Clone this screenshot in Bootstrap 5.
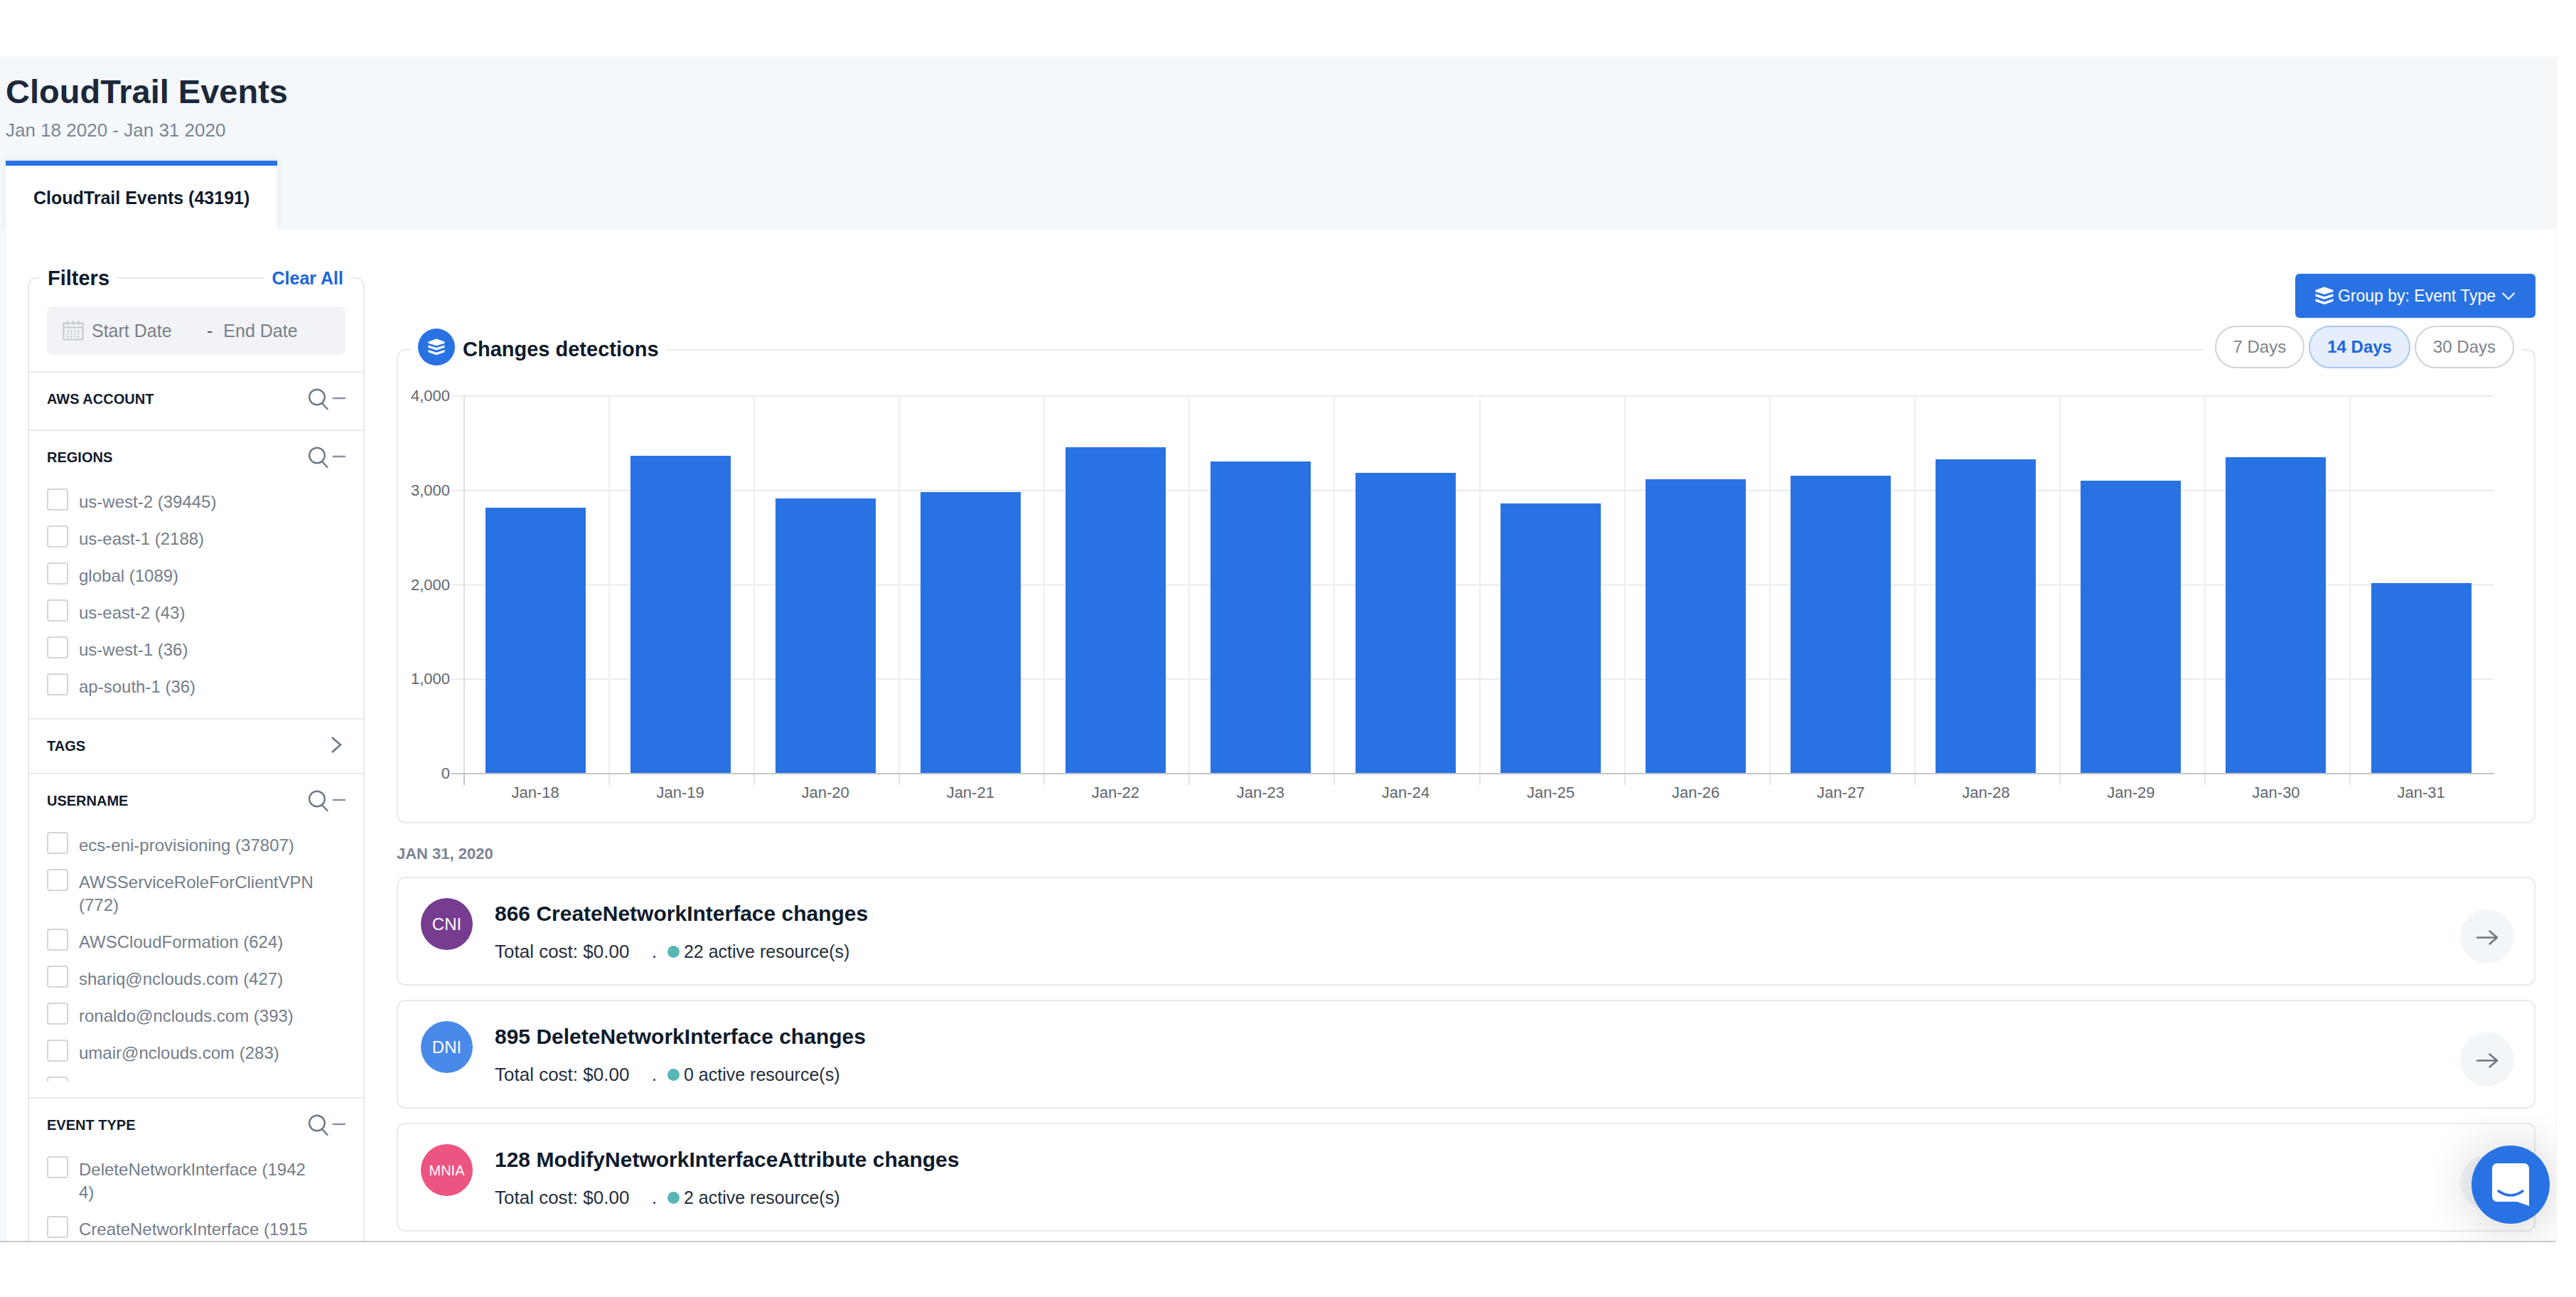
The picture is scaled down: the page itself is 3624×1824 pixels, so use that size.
<!DOCTYPE html>
<html lang="en">
<head>
<meta charset="utf-8">
<meta name="viewport" content="width=device-width, initial-scale=1">
<title>CloudTrail Events</title>
<link href="https://cdn.jsdelivr.net/npm/bootstrap@5.3.0/dist/css/bootstrap.min.css" rel="stylesheet">
<style>
  :root { --blue: #2972e3; --line: #e7eaed; --ink: #101a2b; --muted: #737d8a; }
  body { font-family: "Liberation Sans", Arial, sans-serif; color: var(--ink); background: #fff; font-size: 24px; line-height: 32px; }
  .shell { padding: 80px 28px 77px 0; }
  .app { background: #fff; border-bottom: 2px solid #c6c8ca; box-shadow: 1px 0 0 #f3f4f5; }
  .app-head { background: #f4f8fb; padding: 21px 0 0 8px; }
  .app-title { font-size: 47px; line-height: 56px; font-weight: 700; color: #1c2839; }
  .app-dates { font-size: 26px; line-height: 32px; color: #7b8591; margin: 10px 0 27px; }
  .app-tab { font-size: 25px; line-height: 30px; font-weight: 700; color: var(--ink); background: #fff; border-top: 7px solid var(--blue); padding: 30px 39px; text-decoration: none; box-shadow: 0 -3px 8px rgba(40,60,80,.08); }
  .app-body { border-left: 9px solid #f4f8fb; position: relative; background: #fff; }

  .filters { width: 474px; margin: 67px 45px 0 30px; border: 2px solid var(--line); border-radius: 12px; }
  .filters-top { height: 36px; margin-top: -19px; padding: 0 18px 0 16px; }
  .filters-top > * { background: #fff; padding: 0 10px; line-height: 36px; }
  .filters-name { font-size: 29px; font-weight: 700; }
  .clear { font-size: 25px; font-weight: 700; color: #1a66dc; text-decoration: none; }
  .dates { height: 68px; margin: 22px 25px 23px; padding-left: 22px; border-radius: 8px; background: #f1f3f6; font-size: 25px; }
  .dates input { width: 162px; border: 0; padding: 0; background: transparent; color: #757c83; }
  .dates input::placeholder { color: #7a7f85; opacity: 1; }
  .dates svg { margin-right: 11px; }
  .dates span { color: #555d66; margin-right: 15px; }
  .facet { border-top: 2px solid var(--line); padding: 0 25px 22px; }
  .facet.closed { padding-bottom: 5px; }
  .facet.none { padding-bottom: 10px; }
  .facet-head { height: 70px; padding: 22px 0 18px; }
  .facet-head h2 { font-size: 20px; line-height: 30px; font-weight: 700; }
  .tools { gap: 6px; }
  .tool { border: 0; background: transparent; padding: 0; display: flex; }
  .facet ul { overflow: hidden; }
  .facet .scroller { max-height: 362px; }
  .facet li { padding: 11px 0 6px; gap: 15px; }
  .tick { appearance: none; flex: none; width: 30px; height: 31px; margin: 0; border: 2px solid #d3d6d9; border-radius: 4px; background: #fff; }
  .tick:checked { background: var(--blue); }
  .facet label { width: 331px; margin-top: 3px; color: var(--muted); word-break: break-all; }

  .content { padding: 62px 29px 0 0; min-width: 0; }
  .group-btn { height: 62px; padding: 0 28px; border: 0; border-radius: 6px; background: var(--blue); color: #fff; font-size: 23px; }
  .group-btn span { margin: 0 8px 0 6px; }
  .panel { border: 2px solid var(--line); border-radius: 12px; background: #fff; }
  .chart { margin-top: 44px; }
  .chart-top { height: 60px; margin-top: -35px; padding: 0 18px; }
  .chart-name { background: #fff; padding: 0 11px 0 10px; gap: 11px; }
  .chart-name h2 { font-size: 29px; line-height: 36px; font-weight: 700; padding-top: 5px; }
  .chart-icon { width: 52px; height: 52px; border-radius: 50%; background: var(--blue); }
  .ranges { background: #fff; padding: 0 10px 0 16px; gap: 6px; }
  .pill { height: 60px; padding: 0 24px; border: 2px solid #d0d4d7; border-radius: 30px; background: #fff; color: #7d848c; font-size: 24px; }
  .pill.on { background: #e6eefb; border-color: #a9c7f5; color: #1a66dc; font-weight: 700; }
  .chart-body { padding: 38px 56px 29px 0; font-size: 22px; line-height: 24px; color: #62676d; }
  .y-axis { width: 73px; height: 555px; margin: -11px 2px 0 0; text-align: right; }
  .plot { height: 533px; padding-left: 17px; border-bottom: 2px solid #c4c7ca; background: linear-gradient(#e8eaec 2px, transparent 2px) 0 0 / 100% 25%; }
  .slot { flex: 1 1 0; border-left: 2px solid #eceef0; }
  .slot:first-child { border-color: #dcdfe2; }
  .bar { width: 141px; max-width: 80%; margin-right: 4px; background: var(--blue); }
  .x-axis { padding-left: 17px; }
  .x-axis div { flex: 1 1 0; text-align: center; padding: 14px 2px 0 0; background: linear-gradient(#e3e6e8, #e3e6e8) 0 0 / 2px 15px no-repeat; }
  .x-axis div:first-child { background-image: linear-gradient(#c4c7ca, #c4c7ca); }

  .day { font-size: 22px; line-height: 30px; font-weight: 700; color: #7a8492; margin: 28px 0 17px; }
  .change { padding: 28px 28px 29px 32px; margin-bottom: 20px; }
  .avatar { flex: none; width: 73px; height: 73px; margin-right: 31px; border-radius: 50%; color: #fff; font-size: 24px; }
  .avatar.tiny { font-size: 20px; }
  .change h3 { font-size: 30px; line-height: 36px; font-weight: 700; margin: 4px 0 20px; }
  .facts { font-size: 25px; line-height: 30px; color: #252e3c; }
  .cost { width: 221px; font-size: 26px; }
  .live { width: 17px; height: 17px; border-radius: 50%; background: #58b7b4; margin: 0 6px 0 15px; }
  .go { flex: none; width: 76px; height: 76px; margin-top: 16px; border: 0; border-radius: 50%; background: #f2f6f8; }
  .chat { position: absolute; right: 9px; bottom: 24px; width: 110px; height: 110px; border: 0; border-radius: 50%; background: var(--blue); box-shadow: 0 4px 70px rgba(0,0,0,.2); }
</style>
<script src="https://cdn.jsdelivr.net/npm/bootstrap@5.3.0/dist/js/bootstrap.bundle.min.js"></script>
</head>
<body>
<svg class="d-none" aria-hidden="true">
  <symbol id="i-search" viewBox="0 0 28 30"><g fill="none" stroke="#6f7985" stroke-width="2.4" stroke-linecap="round"><circle cx="12" cy="12.500" r="10.800"/><path d="M19 21l7.500 8"/></g></symbol>
  <symbol id="i-minus" viewBox="0 0 18 30"><path d="M1 14h16" stroke="#8a939d" stroke-width="2.600" stroke-linecap="round"/></symbol>
  <symbol id="i-stack" viewBox="0 0 26 26"><path d="M13 0.500 25.500 5v2.300L13 11 .5 7.300V5z"/><path d="M.5 10.200 13 14.200l12.500-4v3.600L13 18 .5 13.800z"/><path d="M.5 17.200 13 21.400l12.500-4.200v3.600L13 25.300.5 20.800z"/></symbol>
  <symbol id="i-arrow" viewBox="0 0 32 22"><path d="M2 10.500h27M19.500 1.500 30 10.500l-10.500 9" fill="none" stroke="#72757f" stroke-width="2.500" stroke-linecap="round" stroke-linejoin="round"/></symbol>
</svg>

<div class="shell vh-100 overflow-hidden">
<div class="app h-100 d-flex flex-column overflow-hidden position-relative">
  <header class="app-head">
    <h1 class="app-title mb-0">CloudTrail Events</h1>
    <p class="app-dates">Jan 18 2020 - Jan 31 2020</p>
    <nav class="d-flex"><a class="app-tab" href="#events" aria-current="page">CloudTrail Events (43191)</a></nav>
  </header>

  <div class="app-body d-flex flex-grow-1 align-items-start" id="events">
    <aside class="filters flex-shrink-0">
      <div class="filters-top d-flex justify-content-between align-items-center">
        <span class="filters-name">Filters</span>
        <a class="clear" href="#clear">Clear All</a>
      </div>
      <div class="dates d-flex align-items-center">
        <svg width="30" height="30" viewBox="0 0 30 30" aria-hidden="true"><g fill="none" stroke="#c3c9d0" stroke-width="2"><path d="M1.500 4.500h27v23h-27zM1.500 10.500h27M7.500 1v6M15 1v6M22.500 1v6"/><path d="M6 15.500h19M6 19.500h19M6 23.500h19" stroke-dasharray="2.500 2.500"/></g></svg>
        <input type="text" placeholder="Start Date" aria-label="Start date">
        <span>-</span>
        <input type="text" placeholder="End Date" aria-label="End date">
      </div>

      <section class="facet none">
        <div class="facet-head d-flex align-items-center justify-content-between"><h2 class="mb-0">AWS ACCOUNT</h2>
          <div class="tools d-flex"><button class="tool" aria-label="Search accounts"><svg width="28" height="30"><use href="#i-search"/></svg></button><button class="tool" aria-label="Collapse accounts"><svg width="18" height="30"><use href="#i-minus"/></svg></button></div></div>
      </section>

      <section class="facet">
        <div class="facet-head d-flex align-items-center justify-content-between"><h2 class="mb-0">REGIONS</h2>
          <div class="tools d-flex"><button class="tool" aria-label="Search regions"><svg width="28" height="30"><use href="#i-search"/></svg></button><button class="tool" aria-label="Collapse regions"><svg width="18" height="30"><use href="#i-minus"/></svg></button></div></div>
        <ul class="list-unstyled mb-0">
          <li class="d-flex align-items-start"><input class="tick" type="checkbox" id="r1"><label for="r1">us-west-2 (39445)</label></li>
          <li class="d-flex align-items-start"><input class="tick" type="checkbox" id="r2"><label for="r2">us-east-1 (2188)</label></li>
          <li class="d-flex align-items-start"><input class="tick" type="checkbox" id="r3"><label for="r3">global (1089)</label></li>
          <li class="d-flex align-items-start"><input class="tick" type="checkbox" id="r4"><label for="r4">us-east-2 (43)</label></li>
          <li class="d-flex align-items-start"><input class="tick" type="checkbox" id="r5"><label for="r5">us-west-1 (36)</label></li>
          <li class="d-flex align-items-start"><input class="tick" type="checkbox" id="r6"><label for="r6">ap-south-1 (36)</label></li>
        </ul>
      </section>

      <section class="facet closed">
        <div class="facet-head d-flex align-items-center justify-content-between"><h2 class="mb-0">TAGS</h2>
          <button class="tool" aria-label="Expand tags"><svg width="22" height="30" viewBox="0 0 22 30"><path d="M3 3l12 10.500L3 24" fill="none" stroke="#6f7985" stroke-width="2.600"/></svg></button></div>
      </section>

      <section class="facet">
        <div class="facet-head d-flex align-items-center justify-content-between"><h2 class="mb-0">USERNAME</h2>
          <div class="tools d-flex"><button class="tool" aria-label="Search usernames"><svg width="28" height="30"><use href="#i-search"/></svg></button><button class="tool" aria-label="Collapse usernames"><svg width="18" height="30"><use href="#i-minus"/></svg></button></div></div>
        <ul class="list-unstyled mb-0 scroller">
          <li class="d-flex align-items-start"><input class="tick" type="checkbox" id="u1"><label for="u1">ecs-eni-provisioning (37807)</label></li>
          <li class="d-flex align-items-start"><input class="tick" type="checkbox" id="u2"><label for="u2">AWSServiceRoleForClientVPN (772)</label></li>
          <li class="d-flex align-items-start"><input class="tick" type="checkbox" id="u3"><label for="u3">AWSCloudFormation (624)</label></li>
          <li class="d-flex align-items-start"><input class="tick" type="checkbox" id="u4"><label for="u4">shariq@nclouds.com (427)</label></li>
          <li class="d-flex align-items-start"><input class="tick" type="checkbox" id="u5"><label for="u5">ronaldo@nclouds.com (393)</label></li>
          <li class="d-flex align-items-start"><input class="tick" type="checkbox" id="u6"><label for="u6">umair@nclouds.com (283)</label></li>
          <li class="d-flex align-items-start"><input class="tick" type="checkbox" aria-label="Next user"></li>
        </ul>
      </section>

      <section class="facet">
        <div class="facet-head d-flex align-items-center justify-content-between"><h2 class="mb-0">EVENT TYPE</h2>
          <div class="tools d-flex"><button class="tool" aria-label="Search event types"><svg width="28" height="30"><use href="#i-search"/></svg></button><button class="tool" aria-label="Collapse event types"><svg width="18" height="30"><use href="#i-minus"/></svg></button></div></div>
        <ul class="list-unstyled mb-0">
          <li class="d-flex align-items-start"><input class="tick" type="checkbox" id="e1"><label for="e1">DeleteNetworkInterface (19424)</label></li>
          <li class="d-flex align-items-start"><input class="tick" type="checkbox" id="e2"><label for="e2">CreateNetworkInterface (1915</label></li>
        </ul>
      </section>
    </aside>

    <main class="content flex-grow-1">
      <div class="d-flex justify-content-end">
        <button class="group-btn d-flex align-items-center"><svg width="26" height="26" fill="#fff" aria-hidden="true"><use href="#i-stack"/></svg><span>Group by: Event Type</span><svg width="20" height="12" viewBox="0 0 20 12" aria-hidden="true"><path d="M1.500 2 10 10.500 18.500 2" fill="none" stroke="#fff" stroke-width="2"/></svg></button>
      </div>

      <section class="panel chart">
        <div class="chart-top d-flex justify-content-between align-items-center">
          <div class="chart-name d-flex align-items-center">
            <span class="chart-icon d-flex align-items-center justify-content-center"><svg width="26" height="24" fill="#fff" aria-hidden="true"><use href="#i-stack"/></svg></span>
            <h2 class="mb-0">Changes detections</h2>
          </div>
          <div class="ranges d-flex">
            <button class="pill">7 Days</button>
            <button class="pill on" aria-pressed="true">14 Days</button>
            <button class="pill">30 Days</button>
          </div>
        </div>
        <div class="chart-body d-flex">
          <div class="y-axis d-flex flex-column justify-content-between flex-shrink-0"><span>4,000</span><span>3,000</span><span>2,000</span><span>1,000</span><span>0</span></div>
          <div class="flex-grow-1">
            <div class="plot d-flex" id="plot"></div>
            <div class="x-axis d-flex" id="days"></div>
          </div>
        </div>
      </section>

      <h2 class="day">JAN 31, 2020</h2>

      <article class="panel change d-flex align-items-start">
        <div class="avatar d-flex align-items-center justify-content-center" style="background:#763c90">CNI</div>
        <div class="flex-grow-1"><h3>866 CreateNetworkInterface changes</h3>
          <div class="facts d-flex align-items-center"><span class="cost">Total cost: $0.00</span><span>.</span><i class="live"></i><span>22 active resource(s)</span></div></div>
        <button class="go" aria-label="Open"><svg width="32" height="22"><use href="#i-arrow"/></svg></button>
      </article>
      <article class="panel change d-flex align-items-start">
        <div class="avatar d-flex align-items-center justify-content-center" style="background:#4889e9">DNI</div>
        <div class="flex-grow-1"><h3>895 DeleteNetworkInterface changes</h3>
          <div class="facts d-flex align-items-center"><span class="cost">Total cost: $0.00</span><span>.</span><i class="live"></i><span>0 active resource(s)</span></div></div>
        <button class="go" aria-label="Open"><svg width="32" height="22"><use href="#i-arrow"/></svg></button>
      </article>
      <article class="panel change d-flex align-items-start">
        <div class="avatar tiny d-flex align-items-center justify-content-center" style="background:#ec5482">MNIA</div>
        <div class="flex-grow-1"><h3>128 ModifyNetworkInterfaceAttribute changes</h3>
          <div class="facts d-flex align-items-center"><span class="cost">Total cost: $0.00</span><span>.</span><i class="live"></i><span>2 active resource(s)</span></div></div>
        <button class="go" aria-label="Open"><svg width="32" height="22"><use href="#i-arrow"/></svg></button>
      </article>
    </main>
  </div>

  <button class="chat d-flex align-items-center justify-content-center" aria-label="Open chat"><svg width="54" height="62" viewBox="0 0 54 62" aria-hidden="true"><path d="M8 1h38a7 7 0 0 1 7 7v53l-17-6H8a7 7 0 0 1-7-7V8a7 7 0 0 1 7-7z" fill="#fff"/><path d="M10 40q17 12 34 0" fill="none" stroke="#2972e3" stroke-width="3.500" stroke-linecap="round"/></svg></button>
</div>
</div>

<script>
  const counts = [2810, 3357, 2907, 2973, 3452, 3300, 3181, 2853, 3111, 3152, 3319, 3094, 3342, 2012];
  const plot = document.getElementById('plot'), days = document.getElementById('days');
  counts.forEach((n, i) => {
    plot.insertAdjacentHTML('beforeend', `<div class="slot d-flex align-items-end justify-content-center"><div class="bar" style="height:${n / 40}%"></div></div>`);
    days.insertAdjacentHTML('beforeend', `<div>Jan-${18 + i}</div>`);
  });
</script>
</body>
</html>
